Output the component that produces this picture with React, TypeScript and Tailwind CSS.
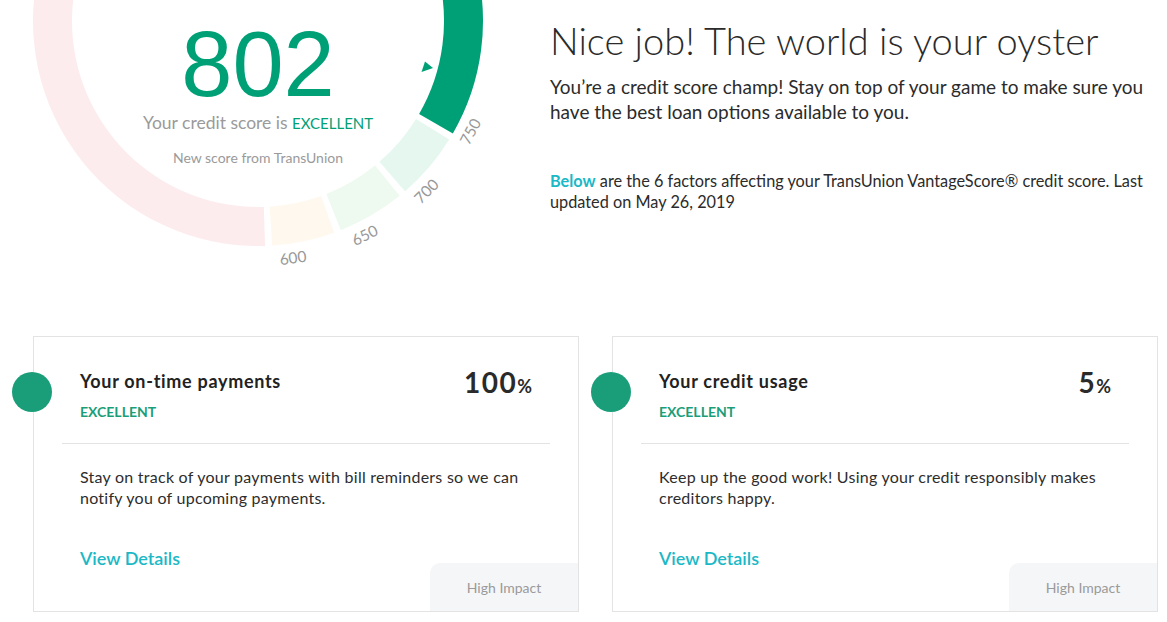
import React from "react";

const CX = 258;
const CY = 21;
const RO = 225;
const RI = 186;

function pt(r: number, deg: number) {
  const a = (deg * Math.PI) / 180;
  return [CX + r * Math.cos(a), CY + r * Math.sin(a)];
}

function sector(a0: number, a1: number) {
  const [x0, y0] = pt(RO, a0);
  const [x1, y1] = pt(RO, a1);
  const [x2, y2] = pt(RI, a1);
  const [x3, y3] = pt(RI, a0);
  const large = a1 - a0 > 180 ? 1 : 0;
  return `M${x0} ${y0} A${RO} ${RO} 0 ${large} 1 ${x1} ${y1} L${x2} ${y2} A${RI} ${RI} 0 ${large} 0 ${x3} ${y3} Z`;
}

const segments = [
  { a0: -15, a1: 30, color: "#00a077" },
  { a0: 31.8, a1: 49.2, color: "#e5f7ef" },
  { a0: 51, a1: 68.4, color: "#eefaf0" },
  { a0: 70.2, a1: 86.4, color: "#fff8ee" },
  { a0: 88.2, a1: 195, color: "#fdecee" },
];

const labels = [
  { text: "750", a: 27.5 },
  { text: "700", a: 45.3 },
  { text: "650", a: 63.5 },
  { text: "600", a: 81.6 },
];

function Gauge() {
  return (
    <svg width="520" height="290" viewBox="0 0 520 290" className="absolute left-0 top-0">
      {segments.map((s, i) => (
        <path key={i} d={sector(s.a0, s.a1)} fill={s.color} />
      ))}
      {labels.map((l, i) => {
        const [x, y] = pt(239, l.a);
        return (
          <text
            key={i}
            x={x}
            y={y}
            fill="#999999"
            fontSize="15.5"
            fontFamily="Lato, sans-serif"
            textAnchor="middle"
            dominantBaseline="central"
            transform={`rotate(${l.a - 90} ${x} ${y})`}
          >
            {l.text}
          </text>
        );
      })}
      <polygon points="421.5,72 433,68 425,61.5" fill="#00a077" />
    </svg>
  );
}

function Card({
  title,
  value,
  body,
}: {
  title: string;
  value: string;
  body: string;
}) {
  return (
    <div className="relative w-[546px] h-[276px] border border-[#e3e3e3] bg-white flex flex-col">
      <div className="absolute left-[-22px] top-[35px] w-[40px] h-[40px] rounded-full bg-[#1a9e7a]" />
      <div className="flex justify-between pl-[46px] pr-[46px] pt-[33px] h-[106px]">
        <div className="flex flex-col">
          <div className="text-[18px] font-bold tracking-[0.7px] text-[#222] leading-[22px]">{title}</div>
          <div className="mt-[11px] text-[14px] font-bold text-[#1a9e7a] leading-[18px]">EXCELLENT</div>
        </div>
        <div className="flex items-baseline text-[#2a2a2a] font-bold leading-none mt-[-2px]">
          <span className="text-[28px] tracking-[1.5px]">{value}</span>
          <span className="text-[18px]">%</span>
        </div>
      </div>
      <div className="mx-[28px] h-px bg-[#e3e3e3]" />
      <div className="pl-[46px] pr-[30px] pt-[22px] text-[16px] tracking-[0.25px] leading-[21px] text-[#2d2d2d] h-[103px]">
        {body}
      </div>
      <div className="pl-[46px] text-[18px] font-semibold text-[#1bb8c6] leading-[22px]">View Details</div>
      <div className="absolute right-0 bottom-0 w-[148px] h-[48px] rounded-tl-[10px] bg-[#f5f6f8] flex items-center justify-center text-[14px] text-[#9a9a9a]">
        High Impact
      </div>
    </div>
  );
}

export default function App() {
  return (
    <div
      className="w-[1167px] h-[622px] bg-white overflow-hidden"
      style={{ fontFamily: "Lato, 'Noto Sans', sans-serif" }}
    >
      <div className="flex h-[336px]">
        <div className="relative w-[520px] h-[290px] shrink-0">
          <Gauge />
          <div className="relative flex flex-col items-center w-[516px] pt-[24px]">
            <div
              className="text-[92px] leading-[80px] text-[#00a077]"
              style={{ fontFamily: "'Liberation Sans', Arial, sans-serif" }}
            >
              802
            </div>
            <div className="mt-[8px] text-[17.5px] leading-[22px] text-[#9a9a9a]">
              Your credit score is <span className="text-[15px] text-[#00a077]">EXCELLENT</span>
            </div>
            <div className="mt-[15px] text-[14px] leading-[18px] text-[#9a9a9a]">New score from TransUnion</div>
          </div>
        </div>
        <div className="pl-[30px] pt-[18px] pr-[10px]">
          <h1 className="text-[38px] font-light leading-[44px] text-[#2b2b2b] whitespace-nowrap">
            Nice job! The world is your oyster
          </h1>
          <p className="mt-[12px] text-[19px] leading-[25px] text-[#2b2b2b]">
            You’re a credit score champ! Stay on top of your game to make sure you have the best loan options
            available to you.
          </p>
          <p className="mt-[46px] text-[16.3px] leading-[21px] text-[#2b2b2b]">
            <span className="font-bold text-[#1bb8c6]">Below</span> are the 6 factors affecting your TransUnion
            VantageScore® credit score. Last updated on May 26, 2019
          </p>
        </div>
      </div>
      <div className="flex gap-[33px] pl-[33px]">
        <Card
          title="Your on-time payments"
          value="100"
          body="Stay on track of your payments with bill reminders so we can notify you of upcoming payments."
        />
        <Card
          title="Your credit usage"
          value="5"
          body="Keep up the good work! Using your credit responsibly makes creditors happy."
        />
      </div>
    </div>
  );
}
